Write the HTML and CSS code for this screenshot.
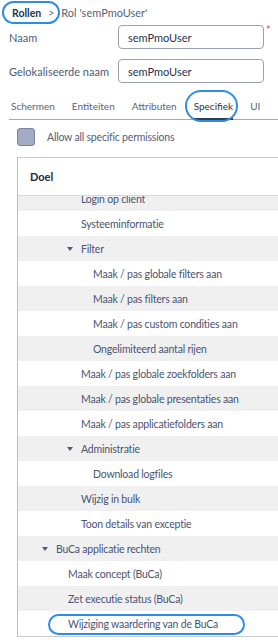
FILE: index.html
```html
<!DOCTYPE html>
<html lang="nl">
<head>
  <meta charset="UTF-8" />
  <title>Rol semPmoUser</title>
  <link rel="stylesheet" href="styles.css">
</head>
<body>
  <div class="page">
    <!-- Breadcrumb -->
    <div class="breadcrumb">
      <a href="#" class="crumb marked">Rollen</a>
      <span class="sep">&gt;</span>
      <span class="current">Rol 'semPmoUser'</span>
    </div>

    <!-- Form -->
    <div class="form-row">
      <label for="naam">Naam</label>
      <input id="naam" value="semPmoUser" />
      <span class="required">*</span>
    </div>
    <div class="form-row">
      <label for="lokaal">Gelokaliseerde naam</label>
      <input id="lokaal" value="semPmoUser" />
    </div>

    <!-- Tabs -->
    <div class="tabs">
      <span class="tab">Schermen</span>
      <span class="tab">Entiteiten</span>
      <span class="tab">Attributen</span>
      <span class="tab active marked">Specifiek</span>
      <span class="tab">UI</span>
    </div>

    <div class="check-row">
      <span class="checkbox"></span>
      <span>Allow all specific permissions</span>
    </div>

    <!-- Permissions table -->
    <div class="table">
      <div class="table-head">Doel</div>
      <ul class="rows">
        <li class="lvl-3">Login op client</li>
        <li class="lvl-3">Systeeminformatie</li>
        <li class="lvl-3"><span class="caret"></span>Filter</li>
        <li class="lvl-4">Maak / pas globale filters aan</li>
        <li class="lvl-4">Maak / pas filters aan</li>
        <li class="lvl-4">Maak / pas custom condities aan</li>
        <li class="lvl-4">Ongelimiteerd aantal rijen</li>
        <li class="lvl-3">Maak / pas globale zoekfolders aan</li>
        <li class="lvl-3">Maak / pas globale presentaties aan</li>
        <li class="lvl-3">Maak / pas applicatiefolders aan</li>
        <li class="lvl-3"><span class="caret"></span>Administratie</li>
        <li class="lvl-4">Download logfiles</li>
        <li class="lvl-3">Wijzig in bulk</li>
        <li class="lvl-3">Toon details van exceptie</li>
        <li class="lvl-1"><span class="caret"></span>BuCa applicatie rechten</li>
        <li class="lvl-2">Maak concept (BuCa)</li>
        <li class="lvl-2">Zet executie status (BuCa)</li>
        <li class="lvl-2"><span class="marked wide">Wijziging waardering van de BuCa</span></li>
      </ul>
    </div>
  </div>
</body>
</html>
```

FILE: styles.css
```css
body {
  margin: 0;
  font-family: Lato, 'Open Sans', sans-serif;
  font-size: 10.5px;
  letter-spacing: -0.2px;
  color: #4a5473;
  background: #fff;
  overflow: hidden;
}

.page {
  width: 278px;
  overflow: hidden;
  padding-bottom: 20px;
}

/* highlight ovals drawn over the screenshot */
.marked {
  position: relative;
}

.marked::after {
  content: '';
  position: absolute;
  border: 2px solid #2f8ce6;
  border-radius: 999px;
  z-index: 2;
}

.breadcrumb {
  display: flex;
  align-items: center;
  height: 25px;
  padding-left: 12px;
  gap: 7px;
  white-space: nowrap;
  letter-spacing: 0;
}

.crumb {
  font-weight: bold;
  color: #1d3550;
  text-decoration: none;
}

.crumb::after {
  top: -6px;
  bottom: -5px;
  left: -10px;
  right: -19px;
}

.sep {
  color: #6b7386;
}

.current {
  color: #5a6276;
  font-size: 11px;
}

.form-row {
  display: flex;
  align-items: center;
  height: 24px;
  padding-left: 9px;
  margin-bottom: 10px;
  white-space: nowrap;
  letter-spacing: 0;
}

.form-row label {
  width: 109px;
  font-size: 11px;
  color: #505a74;
}

.form-row input {
  width: 146px;
  height: 24px;
  box-sizing: border-box;
  border: 1px solid #9ba1b2;
  border-radius: 4px;
  padding: 0 9px;
  font-family: Lato, 'Open Sans', sans-serif;
  font-size: 11px;
  color: #27324c;
}

.required {
  align-self: flex-start;
  color: #e0524a;
  font-size: 11px;
  line-height: 10px;
  margin-left: 2px;
}

.tabs {
  display: flex;
  gap: 17px;
  margin: 8px 0 0 9px;
  padding-left: 2px;
  height: 26px;
  align-items: center;
  border-bottom: 1px solid #6cbdeb;
  white-space: nowrap;
  letter-spacing: 0;
}

.tab {
  color: #5c6377;
  font-size: 10px;
}

.tab.active {
  color: #2c3a52;
  align-self: stretch;
  display: flex;
  align-items: center;
  border-bottom: 2px solid #2e3d55;
  margin-bottom: -1px;
}

.tab.active::after {
  top: -3px;
  bottom: -4px;
  left: -9px;
  right: -5px;
}

.check-row {
  display: flex;
  align-items: center;
  gap: 12px;
  margin: 8px 0 0 17px;
  height: 18px;
  color: #555e77;
  white-space: nowrap;
}

.checkbox {
  width: 18px;
  height: 18px;
  box-sizing: border-box;
  border: 1px solid #7a84a4;
  border-radius: 3px;
  background: #a2aac4;
}

.table {
  margin: 11px 0 0 17px;
  width: 300px;
  border: 1px solid #c7cad3;
  border-left-color: #b8bed0;
}

.table-head {
  position: relative;
  z-index: 1;
  height: 37px;
  display: flex;
  align-items: center;
  padding-left: 12px;
  font-size: 11px;
  font-weight: bold;
  letter-spacing: 0;
  color: #1e2a43;
  background: #fff;
  border-bottom: 1px solid #d3d5db;
}

.rows {
  list-style: none;
  margin: -10px 0 0;
  padding: 0;
}

.rows li {
  height: 25px;
  display: flex;
  align-items: center;
  white-space: nowrap;
}

.rows li:nth-child(odd) {
  background: #f0f0f1;
}

.lvl-1 { padding-left: 38px; }
.lvl-2 { padding-left: 50px; }
.lvl-3 { padding-left: 63px; }
.lvl-4 { padding-left: 75px; }

.caret {
  width: 0;
  height: 0;
  margin-left: -14px;
  margin-right: 8px;
  border-left: 3px solid transparent;
  border-right: 3px solid transparent;
  border-top: 4px solid #525c78;
}

.wide::after {
  top: -4px;
  bottom: -5px;
  left: -20px;
  right: -27px;
}
```
